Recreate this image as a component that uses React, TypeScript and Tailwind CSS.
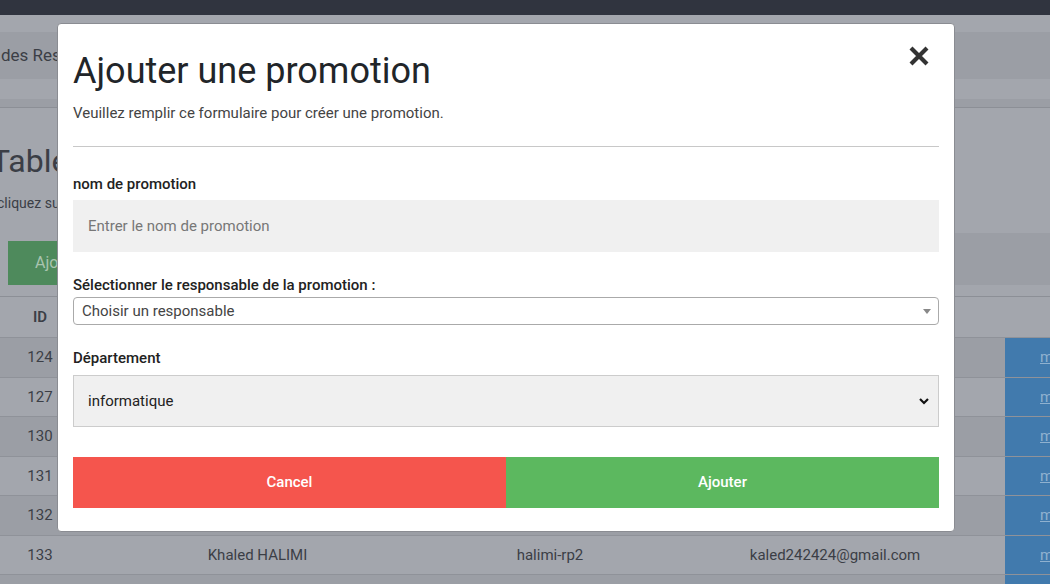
import React from "react";

const rows = [
  { id: 124, name: "", login: "", email: "" },
  { id: 127, name: "", login: "", email: "" },
  { id: 130, name: "", login: "", email: "" },
  { id: 131, name: "", login: "", email: "" },
  { id: 132, name: "", login: "", email: "" },
  { id: 133, name: "Khaled HALIMI", login: "halimi-rp2", email: "kaled242424@gmail.com" },
  { id: 134, name: "", login: "", email: "" },
];

function CloseIcon() {
  return (
    <svg width="22" height="22" viewBox="0 0 22 22" fill="none">
      <path d="M3 3L19 19M19 3L3 19" stroke="#333" strokeWidth="4.2" strokeLinecap="butt" />
    </svg>
  );
}

function Modal() {
  return (
    <div className="absolute left-[57px] top-[23px] w-[898px] bg-white rounded-[4px] border border-[#8a8c92] px-[15px] pt-[26px] pb-[23px] text-[#222]">
      <button className="absolute right-[24px] top-[21px]" aria-label="Fermer">
        <CloseIcon />
      </button>

      <h1 className="text-[36px] leading-[43px] text-[#212529] font-normal">Ajouter une promotion</h1>
      <p className="mt-[10px] text-[15px] leading-[20px] text-[#444]">
        Veuillez remplir ce formulaire pour créer une promotion.
      </p>
      <hr className="mt-[23px] border-0 border-t border-[#c8c8c8]" />

      <label className="block mt-[27px] text-[15px] leading-[20px] font-medium text-[#222]">nom de promotion</label>
      <div className="mt-[6px] h-[52px] bg-[#f0f0f0] flex items-center px-[15px] text-[15px] text-[#777]">
        Entrer le nom de promotion
      </div>

      <label className="block mt-[23px] text-[15px] leading-[20px] font-medium text-[#222]">
        Sélectionner le responsable de la promotion :
      </label>
      <div className="mt-[2px] h-[28px] border border-[#aaa] rounded-[4px] bg-white flex items-center justify-between pl-[8px] pr-[7px] text-[15px] text-[#444]">
        <span>Choisir un responsable</span>
        <span className="w-0 h-0 border-l-[4px] border-r-[4px] border-t-[5px] border-l-transparent border-r-transparent border-t-[#888]" />
      </div>

      <label className="block mt-[23px] text-[15px] leading-[20px] font-medium text-[#222]">Département</label>
      <div className="mt-[7px] h-[52px] bg-[#f0f0f0] border border-[#ccc] flex items-center justify-between pl-[14px] pr-[8px] text-[15px] text-[#222]">
        <span>informatique</span>
        <svg width="12" height="8" viewBox="0 0 12 8" fill="none">
          <path d="M2 2L6 6L10 2" stroke="#111" strokeWidth="2.2" />
        </svg>
      </div>

      <div className="mt-[30px] flex h-[51px]">
        <button className="flex-1 bg-[#f5554d] text-white text-[15px] font-medium">Cancel</button>
        <button className="flex-1 bg-[#5cb85f] text-white text-[15px] font-medium">Ajouter</button>
      </div>
    </div>
  );
}

export default function App() {
  return (
    <div className="relative h-[584px] w-[1050px] overflow-hidden bg-[#a3a6ad] font-['Roboto',sans-serif] text-[#3b3e46]">
      <div className="h-[15px] bg-[#30343f]" />
      <div className="h-[17px]" />
      <div className="h-[47px] bg-[#9b9ea5] flex items-center pl-[1px] text-[17px]">des Responsables</div>
      <div className="h-[20px]" />
      <div className="h-[9px] bg-[#9b9ea5] border-b border-[#8c8f96]" />

      <h2 className="mt-[32px] -ml-[9px] text-[32px] leading-[43px] whitespace-nowrap">Table des promotions</h2>
      <p className="mt-[10px] -ml-[3px] text-[14px] leading-[20px] whitespace-nowrap">cliquez sur une ligne pour modifier</p>

      <div className="mt-[20px] flex items-end h-[52px]">
        <button className="ml-[8px] h-[44px] w-[110px] bg-[#4e8a5c] text-[#a9c4af] text-[16px] text-left pl-[27px]">Ajouter</button>
        <div className="ml-auto w-[500px] h-[52px] bg-[#9b9ea5]" />
      </div>

      <div className="mt-[11px] border-t border-[#8c8f96]">
        <div className="flex h-[40px] items-center font-semibold text-[15px]">
          <div className="w-[80px] text-center">ID</div>
          <div className="w-[355px]" />
          <div className="w-[230px]" />
          <div className="w-[340px]" />
        </div>
        {rows.map((r, i) => (
          <div
            key={r.id}
            className={`flex h-[39.5px] border-t border-[#8f9299] text-[15px] ${i % 2 === 0 ? "bg-[#9b9ea5]" : "bg-[#a3a6ad]"}`}
          >
            <div className="w-[80px] flex items-center justify-center">{r.id}</div>
            <div className="w-[355px] flex items-center justify-center">{r.name}</div>
            <div className="w-[230px] flex items-center justify-center">{r.login}</div>
            <div className="w-[340px] flex items-center justify-center">{r.email}</div>
            <div className="flex-1 bg-[#417aad] flex items-center pl-[35px] overflow-hidden">
              <span className="underline text-[#8fb1cf] whitespace-nowrap">modifier</span>
            </div>
          </div>
        ))}
      </div>

      <Modal />
    </div>
  );
}
